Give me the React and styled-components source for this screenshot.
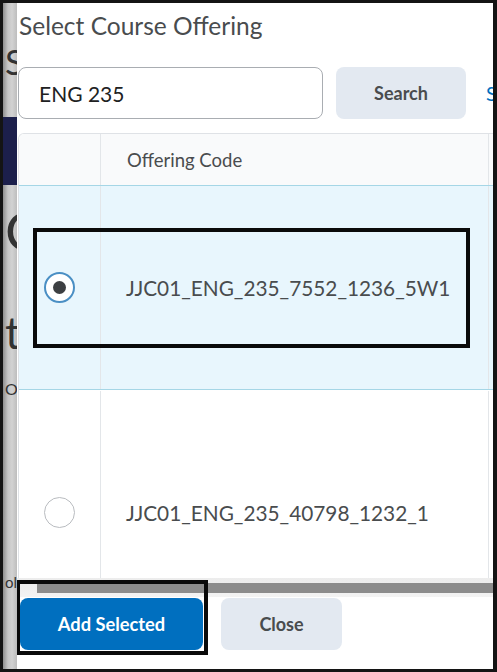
import React from 'react';
import styled, { createGlobalStyle } from 'styled-components';

const GlobalStyle = createGlobalStyle`
  html, body {
    margin: 0;
    padding: 0;
    background: #ffffff;
  }
  * {
    box-sizing: border-box;
  }
`;

const offerings = [
  { code: 'JJC01_ENG_235_7552_1236_5W1', selected: true, height: 205 },
  { code: 'JJC01_ENG_235_40798_1232_1', selected: false, height: 244 },
];

const App = () => {
  return (
    <>
      <GlobalStyle />
      <Frame>
        <Backdrop>
          <BackLabel $size={35} $top={41}>S</BackLabel>
          <NavBand />
          <BackLabel $size={55} $top={18}>C</BackLabel>
          <BackLabel $size={44} $top={52}>t</BackLabel>
          <BackLabel $size={16} $top={27}>Org</BackLabel>
          <BackLabel $size={15} $top={178}>ol</BackLabel>
        </Backdrop>

        <Dialog>
          <Title>Select Course Offering</Title>

          <SearchRow>
            <SearchInput defaultValue="ENG 235" readOnly />
            <GreyButton $width={130}>Search</GreyButton>
            <OptionsLink>Show Search Options</OptionsLink>
          </SearchRow>

          <TableViewport>
            <HeaderRow>
              <Cell />
              <Cell $pad={26}>
                <HeaderText>Offering Code</HeaderText>
              </Cell>
              <Cell />
            </HeaderRow>
            {offerings.map((o) => (
              <Row key={o.code} $selected={o.selected} $height={o.height}>
                <Cell $center>
                  <Radio $checked={o.selected} />
                </Cell>
                <Cell $pad={25}>
                  <CodeText>{o.code}</CodeText>
                </Cell>
                <Cell />
                {o.selected && <RowMark />}
              </Row>
            ))}
          </TableViewport>

          <ScrollTrack>
            <ScrollThumb />
          </ScrollTrack>

          <Footer>
            <Marked>
              <PrimaryButton>Add Selected</PrimaryButton>
              <FooterMark />
            </Marked>
            <GreyButton $width={121}>Close</GreyButton>
          </Footer>
        </Dialog>
      </Frame>
    </>
  );
};

const Frame = styled.div`
  display: flex;
  width: 497px;
  height: 672px;
  border-style: solid;
  border-color: #141414;
  border-width: 3px 4px 3px 3px;
  overflow: hidden;
  font-family: Lato, 'Noto Sans', sans-serif;
`;

const Backdrop = styled.div`
  flex: 0 0 14px;
  display: flex;
  flex-direction: column;
  overflow: hidden;
  background: linear-gradient(90deg, #8f8f8f 0%, #c6c6c6 35%, #d2d2d2 65%, #bdbdbd 100%);
`;

const BackLabel = styled.div`
  margin-top: ${(p) => p.$top}px;
  padding-left: 2px;
  font-size: ${(p) => p.$size}px;
  line-height: 1;
  height: ${(p) => p.$size}px;
  white-space: nowrap;
  color: #333333;
`;

const NavBand = styled.div`
  margin-top: 38px;
  height: 68px;
  flex-shrink: 0;
  background: #1c1f4b;
`;

const Dialog = styled.div`
  flex: 1;
  display: flex;
  flex-direction: column;
  background: #ffffff;
  overflow: hidden;
  min-width: 0;
`;

const Title = styled.h1`
  margin: 9px 0 0 2px;
  font-size: 24.5px;
  line-height: 28px;
  font-weight: 400;
  color: #494c4e;
  white-space: nowrap;
`;

const SearchRow = styled.div`
  display: flex;
  align-items: center;
  gap: 13px;
  margin: 27px 0 0 1px;
  height: 52px;
  white-space: nowrap;
`;

const SearchInput = styled.input`
  flex: 0 0 305px;
  height: 52px;
  padding: 0 0 0 20px;
  border: 1.5px solid #a9adb2;
  border-radius: 8px;
  font-family: inherit;
  font-size: 21px;
  color: #202122;
  background: #ffffff;
  outline: none;
`;

const GreyButton = styled.button`
  flex: 0 0 ${(p) => p.$width}px;
  height: 52px;
  border: none;
  border-radius: 8px;
  background: #e3e9f1;
  font-family: inherit;
  font-size: 18px;
  font-weight: 700;
  color: #494c4e;
`;

const OptionsLink = styled.span`
  margin-left: 7px;
  font-size: 20px;
  color: #006fbf;
`;

const TableViewport = styled.div`
  margin: 14px 0 0 1px;
  height: 445px;
  overflow: hidden;
  border-top: 1px solid #dfe2e6;
  border-left: 1px solid #dfe2e6;
  border-top-left-radius: 6px;
`;

const gridCols = '82px 388px 220px';

const HeaderRow = styled.div`
  display: grid;
  grid-template-columns: ${gridCols};
  height: 51px;
  background: #f9fafb;
`;

const Row = styled.div`
  position: relative;
  display: grid;
  grid-template-columns: ${gridCols};
  height: ${(p) => p.$height}px;
  flex-shrink: 0;
  background: ${(p) => (p.$selected ? '#e8f6fd' : '#ffffff')};
  border-top: 1px solid ${(p) => (p.$selected ? '#a5d6e6' : 'transparent')};
  border-bottom: 1px solid ${(p) => (p.$selected ? '#a5d6e6' : 'transparent')};
`;

const Cell = styled.div`
  display: flex;
  align-items: center;
  justify-content: ${(p) => (p.$center ? 'center' : 'flex-start')};
  padding-left: ${(p) => p.$pad || 0}px;
  border-right: 1px solid #e3e6e9;
  white-space: nowrap;
`;

const HeaderText = styled.span`
  font-size: 18.5px;
  color: #494c4e;
`;

const CodeText = styled.span`
  font-size: 20.8px;
  color: #494c4e;
`;

const Radio = styled.span`
  position: relative;
  width: 31px;
  height: 31px;
  border-radius: 50%;
  background: #ffffff;
  border: ${(p) => (p.$checked ? '2px solid #4a8fc4' : '1px solid #b9bcc0')};
  ${(p) =>
    p.$checked &&
    `
    &::after {
      content: '';
      position: absolute;
      top: 50%;
      left: 50%;
      width: 13px;
      height: 13px;
      margin: -6.5px 0 0 -6.5px;
      border-radius: 50%;
      background: #3c3f42;
    }
  `}
`;

const RowMark = styled.div`
  position: absolute;
  left: 14px;
  top: 42px;
  width: 437px;
  height: 120px;
  border: 4.5px solid #0a0a0a;
  pointer-events: none;
`;

const ScrollTrack = styled.div`
  height: 19px;
  padding-top: 5px;
  background: linear-gradient(#ececec, #f3f3f3);
  flex-shrink: 0;
`;

const ScrollThumb = styled.div`
  margin-left: 20px;
  height: 10px;
  background: #8c8c8c;
`;

const Footer = styled.div`
  display: flex;
  align-items: center;
  gap: 18px;
  margin-top: 1px;
  padding-left: 3px;
`;

const Marked = styled.div`
  position: relative;
  display: flex;
`;

const PrimaryButton = styled.button`
  width: 183px;
  height: 52px;
  border: none;
  border-radius: 8px;
  background: #006fbf;
  font-family: inherit;
  font-size: 18.3px;
  font-weight: 700;
  color: #ffffff;
`;

const FooterMark = styled.div`
  position: absolute;
  top: -18px;
  left: -4px;
  right: -5px;
  bottom: -5px;
  border: 4px solid #0a0a0a;
  pointer-events: none;
`;

export default App;
